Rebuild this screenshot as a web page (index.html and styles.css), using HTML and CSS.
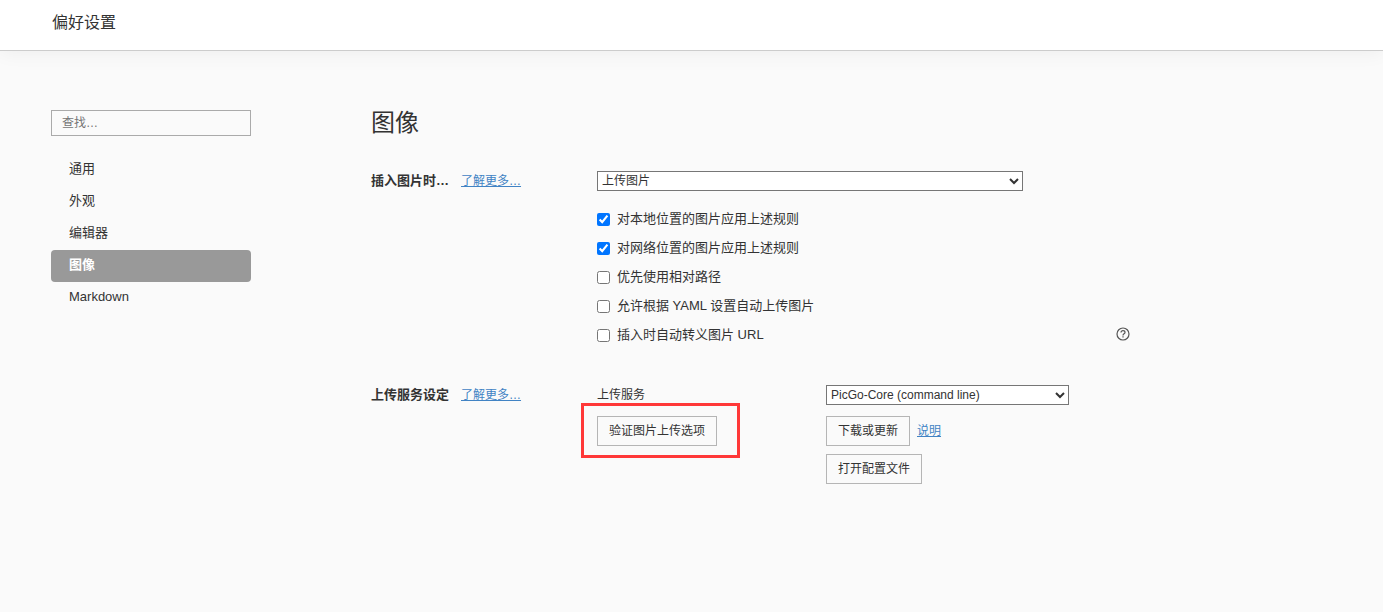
FILE: index.html
```html
<!DOCTYPE html>
<html lang="zh-CN">
<head>
<meta charset="utf-8">
<title>偏好设置</title>
<link rel="stylesheet" href="styles.css">
</head>
<body>
<header class="topbar">偏好设置</header>
<div class="page">
  <aside class="sidebar">
    <input class="search" type="text" placeholder="查找…" aria-label="查找">
    <nav class="nav">
      <a class="nav-item" href="#general">通用</a>
      <a class="nav-item" href="#appearance">外观</a>
      <a class="nav-item" href="#editor">编辑器</a>
      <a class="nav-item active" href="#image">图像</a>
      <a class="nav-item" href="#markdown">Markdown</a>
    </nav>
  </aside>
  <main class="content">
    <h1 class="title">图像</h1>
    <section class="group">
      <div class="group-head">
        <label class="group-name" for="insert">插入图片时…</label>
        <a class="link" href="#more-insert">了解更多…</a>
      </div>
      <div class="group-body">
        <select class="select wide" id="insert"><option>上传图片</option></select>
        <div class="checks">
          <label class="check"><input type="checkbox" checked>对本地位置的图片应用上述规则</label>
          <label class="check"><input type="checkbox" checked>对网络位置的图片应用上述规则</label>
          <label class="check"><input type="checkbox">优先使用相对路径</label>
          <label class="check"><input type="checkbox">允许根据 YAML 设置自动上传图片</label>
          <div class="check-row">
            <label class="check"><input type="checkbox">插入时自动转义图片 URL</label>
            <button class="help" type="button" aria-label="帮助">
              <svg width="14" height="14" viewBox="0 0 14 14" fill="none" stroke="#555" stroke-width="1.2">
                <circle cx="7" cy="7" r="6"/>
                <path d="M5 5.6C5 4.3 5.9 3.6 7 3.6s2 .7 2 1.8C9 6.8 7 6.9 7 8.4"/>
                <path d="M7 9.3v1.3"/>
              </svg>
            </button>
          </div>
        </div>
      </div>
    </section>
    <section class="group">
      <div class="group-head">
        <span class="group-name">上传服务设定</span>
        <a class="link" href="#more-upload">了解更多…</a>
      </div>
      <div class="group-body service">
        <div class="service-col">
          <label class="service-label" for="service">上传服务</label>
          <div class="marked"><button class="btn" type="button">验证图片上传选项</button></div>
        </div>
        <div class="service-col">
          <select class="select service-select" id="service"><option>PicGo-Core (command line)</option></select>
          <div class="btn-row">
            <button class="btn" type="button">下载或更新</button>
            <a class="link" href="#guide">说明</a>
          </div>
          <button class="btn" type="button">打开配置文件</button>
        </div>
      </div>
    </section>
  </main>
</div>
</body>
</html>
```
FILE: styles.css
```css
* {
  box-sizing: border-box;
}

body {
  margin: 0;
  min-height: 100vh;
  background: #fafafa;
  color: #333;
  font-family: "Liberation Sans", "Noto Sans CJK SC", sans-serif;
  font-size: 13px;
  line-height: 20px;
}

input,
select,
button {
  margin: 0;
  color: inherit;
  font-family: inherit;
  font-size: 12px;
}

.topbar {
  padding: 13px 52px 17px;
  border-bottom: 1px solid #ccc;
  background: #fff;
  box-shadow: 0 1px 20px rgba(0, 0, 0, 0.06);
  font-size: 16px;
}

.page {
  display: flex;
  gap: 120px;
  padding: 54px 51px 40px;
}

.sidebar {
  flex: 0 0 200px;
  padding-top: 5px;
}

.search {
  display: block;
  width: 100%;
  height: 26px;
  padding: 0 10px;
  border: 1px solid #aaa;
  background: transparent;
}

.search::placeholder {
  color: #757575;
}

.nav {
  display: flex;
  flex-direction: column;
  margin-top: 18px;
}

.nav-item {
  padding: 5px 18px 7px;
  border-radius: 4px;
  color: inherit;
  text-decoration: none;
}

.nav-item.active {
  background: #999;
  color: #fff;
  font-weight: bold;
}

.content {
  flex: 1;
  max-width: 759px;
}

.title {
  margin: 0 0 30px;
  font-size: 24px;
  font-weight: normal;
  line-height: 36px;
}

.group {
  display: grid;
  grid-template-columns: 226px 1fr;
  margin-bottom: 40px;
}

.group-head {
  display: flex;
  align-items: baseline;
  align-self: start;
  gap: 12px;
}

.group-name {
  font-weight: bold;
}

.link {
  color: #4183c4;
  font-size: 12px;
}

.select {
  display: block;
  height: 20px;
  padding: 0;
  border: 1px solid #767676;
  border-radius: 0;
  background-color: #fff;
}

.wide {
  width: 80%;
}

.checks {
  display: flex;
  flex-direction: column;
  gap: 9px;
  margin-top: 18px;
}

.check {
  display: flex;
  align-items: center;
  gap: 7px;
}

.check input {
  width: 13px;
  height: 13px;
}

.check-row {
  display: flex;
  align-items: center;
  justify-content: space-between;
}

.help {
  display: flex;
  padding: 0 0 2px;
  border: 0;
  background: none;
}

.service {
  display: grid;
  grid-template-columns: 229px 1fr;
}

.service-col {
  display: flex;
  flex-direction: column;
  align-items: flex-start;
}

.service-label {
  margin-bottom: 11px;
  font-size: 12px;
}

.service-select {
  width: 80%;
  margin-bottom: 11px;
}

.btn {
  height: 30px;
  padding: 0 11px 3px;
  border: 1px solid #b5b5b5;
  background: transparent;
}

.btn-row {
  display: flex;
  align-items: center;
  gap: 7px;
  margin-bottom: 8px;
}

.marked {
  position: relative;
}

.marked::after {
  content: "";
  position: absolute;
  inset: -13px -23px -12px -16px;
  border: 3px solid #ff3838;
  pointer-events: none;
}
```
